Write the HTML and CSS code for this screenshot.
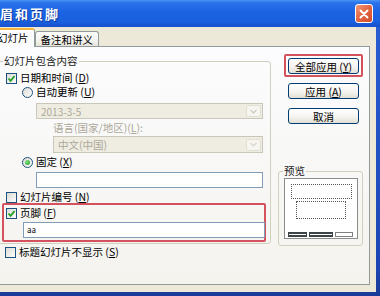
FILE: index.html
```html
<!DOCTYPE html>
<html lang="zh-CN">
<head>
<meta charset="utf-8">
<title>页眉和页脚</title>
<link rel="stylesheet" href="styles.css">
</head>
<body>
<div class="window">
  <div class="titlebar">
    <span class="title">页眉和页脚</span>
    <span class="close"><svg width="10" height="10" viewBox="0 0 10 10"><path d="M1.5 1.5L8.5 8.5M8.5 1.5L1.5 8.5" stroke="#fff" stroke-width="2" stroke-linecap="round"/></svg></span>
  </div>
  <div class="body">
    <div class="tabs">
      <div class="tab active">幻灯片</div>
      <div class="tab">备注和讲义</div>
    </div>
    <div class="panel">
      <div class="left">
        <fieldset class="group">
          <legend>幻灯片包含内容</legend>
          <div class="row r1"><span class="cb"><svg width="9" height="9" viewBox="0 0 9 9"><path d="M1.5 4.5L3.6 6.8L7.6 2" fill="none" stroke="#21a121" stroke-width="1.8"/></svg></span><span>日期和时间 (<u>D</u>)</span></div>
          <div class="row r2"><span class="rb"></span><span>自动更新 (<u>U</u>)</span></div>
          <div class="combo c1"><span>2013-3-5</span><span class="drop"><svg width="7" height="5" viewBox="0 0 7 5"><path d="M0.5 0.8L3.5 3.8L6.5 0.8" fill="none" stroke="#c9c7ba" stroke-width="1.2"/></svg></span></div>
          <div class="sub-label">语言(国家/地区)(<u>L</u>):</div>
          <div class="combo c2"><span>中文(中国)</span><span class="drop"><svg width="7" height="5" viewBox="0 0 7 5"><path d="M0.5 0.8L3.5 3.8L6.5 0.8" fill="none" stroke="#d6d4c8" stroke-width="1.2"/></svg></span></div>
          <div class="row r3"><span class="rb on"></span><span>固定 (<u>X</u>)</span></div>
          <div class="textbox t1"></div>
          <div class="row r4"><span class="cb"></span><span>幻灯片编号 (<u>N</u>)</span></div>
          <div class="mark footer">
            <div class="row r6"><span class="cb"><svg width="9" height="9" viewBox="0 0 9 9"><path d="M1.5 4.5L3.6 6.8L7.6 2" fill="none" stroke="#21a121" stroke-width="1.8"/></svg></span><span>页脚 (<u>F</u>)</span></div>
            <div class="textbox t2">aa</div>
          </div>
        </fieldset>
        <div class="row r5"><span class="cb"></span><span>标题幻灯片不显示 (<u>S</u>)</span></div>
      </div>
      <div class="right">
        <div class="mark hl"><button class="btn">全部应用 (<u>Y</u>)</button></div>
        <button class="btn b2">应用 (<u>A</u>)</button>
        <button class="btn b3">取消</button>
        <fieldset class="preview">
          <legend>预览</legend>
          <div class="page">
            <div class="dot d1"></div>
            <div class="dot d2"></div>
            <div class="bars"><span class="bar on b-1"></span><span class="bar on b-2"></span><span class="bar b-3"></span></div>
          </div>
        </fieldset>
      </div>
    </div>
  </div>
</div>
</body>
</html>
```

FILE: styles.css
```css
* { box-sizing: border-box; }
html, body { margin: 0; padding: 0; }
body {
  width: 380px;
  height: 296px;
  overflow: hidden;
  background: #ece9d8;
  font-family: "Noto Sans CJK SC", "Noto Sans", sans-serif;
  font-size: 10.5px;
  color: #000;
}
.window {
  margin-left: -14px;
  width: 394px;
  height: 296px;
  display: flex;
  flex-direction: column;
  padding: 0 4px 4px 4px;
  background: linear-gradient(to bottom, #2a5fd6, #1c46b4 90%, #1a3a96);
}
.titlebar {
  flex: none;
  height: 27px;
  margin: 0 -4px;
  display: flex;
  align-items: flex-start;
  justify-content: space-between;
  background: linear-gradient(to bottom, #4a95f6 0%, #2a72ea 10%, #1b63e2 45%, #1a60df 80%, #1750cc 100%);
}
.title {
  margin: 6px 0 0 -1px;
  color: #fff;
  font-weight: bold;
  font-size: 13px;
  line-height: 15px;
  letter-spacing: 2px;
  text-shadow: 1px 1px 0 #0c3a9c;
}
.close {
  margin: 4px 7px 0 0;
  width: 18px;
  height: 19px;
  display: flex;
  align-items: center;
  justify-content: center;
  border: 1px solid #fff;
  border-radius: 3px;
  background: linear-gradient(135deg, #f09a78, #e2643f 50%, #d04e2a);
}
.body {
  flex: 1;
  display: flex;
  flex-direction: column;
  background: #ece9d8;
}
.tabs {
  flex: none;
  height: 19px;
  display: flex;
  align-items: flex-end;
  padding-left: 1px;
}
.tab {
  height: 15px;
  padding: 2px 5px 0 5px;
  line-height: 12px;
  border: 1px solid #919b9c;
  border-bottom: none;
  border-radius: 3px 3px 0 0;
  background: linear-gradient(#fefefe, #f4f3ee 60%, #e6e4da);
  white-space: nowrap;
}
.tab.active {
  height: 19px;
  margin-bottom: -1px;
  position: relative;
  z-index: 1;
  padding-top: 2px;
  border-top: 2px solid #f5b53d;
  background: #fcfcfe;
}
.panel {
  flex: 1;
  margin: 0 6px 7px 2px;
  border: 1px solid #919b9c;
  background: linear-gradient(#fcfcfe, #f4f3ee);
  padding: 8px 0 0 3px;
  display: flex;
  align-items: flex-start;
}
.left { flex: none; width: 275px; }
fieldset {
  margin: 0;
  min-width: 0;
  border: 1px solid #d0d0bf;
  border-radius: 3px;
}
legend {
  line-height: 12px;
  color: #222;
}
.group { padding: 0 0 1px 0; }
.group legend { margin-left: 6px; padding: 0 1px; }
.row {
  display: flex;
  align-items: center;
  gap: 3px;
  height: 12px;
  line-height: 12px;
  white-space: nowrap;
}
.cb {
  flex: none;
  width: 11px;
  height: 11px;
  border: 1px solid #1c5180;
  background: linear-gradient(135deg, #dcdcd7, #fbfbf9);
  display: flex;
  align-items: center;
  justify-content: center;
}
.rb {
  flex: none;
  width: 11px;
  height: 11px;
  border: 1px solid #1c5180;
  border-radius: 50%;
  background: linear-gradient(135deg, #dcdcd7, #fbfbf9);
  display: flex;
  align-items: center;
  justify-content: center;
}
.rb.on::after {
  content: "";
  width: 5px;
  height: 5px;
  border-radius: 50%;
  background: radial-gradient(circle at 35% 35%, #7fe07f, #21a121);
}
.r1 { margin: 5px 0 0 9px; }
.r2 { margin: 2px 0 0 25px; }
.combo {
  display: flex;
  align-items: center;
  justify-content: space-between;
  border: 1px solid #c9c7ba;
  background: #efede2;
  color: #aca899;
  padding-left: 4px;
  white-space: nowrap;
}
.c1 { margin: 5px 0 0 39px; width: 227px; height: 16px; font-size: 10px; }
.c2 { margin: 2px 0 0 56px; width: 210px; height: 17px; }
.drop {
  width: 15px;
  height: 12px;
  margin-right: 1px;
  border: 1px solid #e2e0d5;
  border-radius: 2px;
  background: #f6f5f0;
  display: flex;
  align-items: center;
  justify-content: center;
}
.sub-label {
  margin: 3px 0 0 56px;
  height: 12px;
  line-height: 12px;
  color: #aca899;
  white-space: nowrap;
}
.r3 { margin: 3px 0 0 25px; }
.textbox {
  border: 1px solid #7f9db9;
  background: #fff;
}
.t1 { margin: 4px 0 0 39px; width: 227px; height: 16px; }
.r4 { margin: 3px 0 0 9px; }
.mark {
  border: 2px solid #d4525e;
  border-radius: 2px;
}
.footer {
  margin: 0 0 0 5px;
  width: 264px;
  padding: 2px 0 2px 2px;
}
.t2 {
  margin: 3px 0 0 17px;
  width: 242px;
  height: 16px;
  font-size: 8px;
  line-height: 13px;
  padding-left: 3px;
}
.r5 { margin: 2px 0 0 9px; }
.right {
  flex: none;
  margin-left: 7px;
  width: 86px;
  display: flex;
  flex-direction: column;
  align-items: flex-start;
}
.btn {
  width: 71px;
  height: 16px;
  padding: 0;
  font: inherit;
  line-height: 13px;
  color: #000;
  border: 1px solid #003c74;
  border-radius: 3px;
  background: linear-gradient(#ffffff, #f5f4f0 55%, #e2dfd4);
  white-space: nowrap;
}
.hl { margin: -1px 0 0 6px; padding: 2px 2px 1px 2px; }
.hl .btn { display: block; }
.b2 { margin: 6px 0 0 10px; }
.b3 { margin: 9px 0 0 10px; }
.preview {
  margin-top: 41px;
  width: 85px;
  padding: 0 4px 6px 5px;
}
.preview legend { padding: 0 1px; margin-left: -1px; }
.page {
  margin-top: 1px;
  width: 74px;
  height: 61px;
  border: 1px solid #8c8c8c;
  background: #fff;
  display: flex;
  flex-direction: column;
  align-items: center;
  padding-top: 5px;
}
.dot { border: 1px dotted #555; }
.d1 { width: 61px; height: 15px; }
.d2 { width: 50px; height: 18px; margin-top: 2px; }
.bars {
  margin-top: auto;
  margin-bottom: 1px;
  align-self: stretch;
  display: flex;
  gap: 2px;
  padding-left: 3px;
}
.bar {
  height: 5px;
  border: 1px solid #808080;
  background: #fff;
}
.bar.on { border: 2px solid #3c4448; border-width: 2px 1px; }
.b-1 { width: 19px; }
.b-2 { width: 24px; }
.b-3 { width: 18px; }
```
